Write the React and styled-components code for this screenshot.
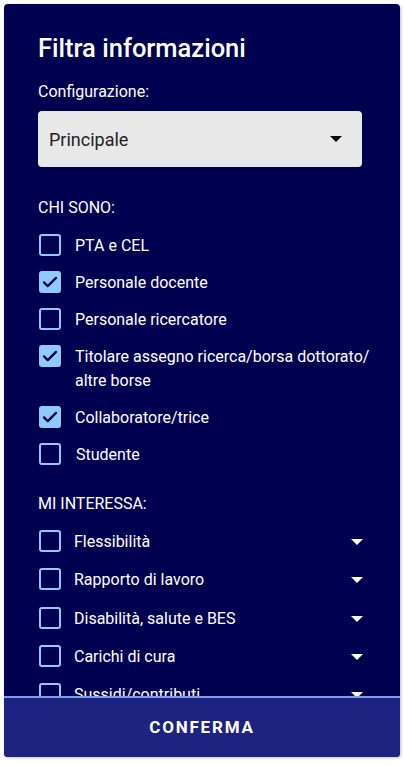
import React, { useState } from "react";
import styled, { createGlobalStyle } from "styled-components";

const GlobalStyle = createGlobalStyle`
  html, body {
    margin: 0;
    padding: 0;
    background: #ffffff;
    font-family: Roboto, "Liberation Sans", sans-serif;
  }
`;

const Page = styled.div`
  padding: 4px 5px 8px 4px;
  box-sizing: border-box;
  width: 405px;
  height: 765px;
`;

const Card = styled.div`
  height: 753px;
  display: flex;
  flex-direction: column;
  background: #000050;
  border-radius: 4px;
  overflow: hidden;
  box-shadow: 1px 1px 3px rgba(0, 0, 0, 0.25);
`;

const Scroll = styled.div`
  flex: 1;
  overflow: hidden;
  padding: 28px 24px 0 34px;
  color: #ffffff;
`;

const Title = styled.h2`
  margin: 0;
  font-size: 25.5px;
  font-weight: 500;
  line-height: 32px;
`;

const Label = styled.div`
  font-size: 16px;
  line-height: 20px;
  margin-top: ${(p) => p.$top || 0}px;
`;

const Select = styled.div`
  margin: 9px 14px 0 0;
  height: 56px;
  background: #e8e8e8;
  border-radius: 4px;
  display: flex;
  align-items: center;
  justify-content: space-between;
  padding: 0 20px 0 11px;
  color: #222;
  font-size: 18px;
`;

const Caret = styled.span`
  width: 0;
  height: 0;
  border-left: 6px solid transparent;
  border-right: 6px solid transparent;
  border-top: 6px solid ${(p) => p.$color || "#000"};
`;

const List = styled.div`
  margin-top: ${(p) => p.$top}px;
  display: flex;
  flex-direction: column;
  gap: ${(p) => p.$gap}px;
`;

const Row = styled.label`
  display: flex;
  align-items: flex-start;
  gap: 14px;
  font-size: 16px;
  line-height: 24px;
  cursor: pointer;
`;

const Box = styled.span`
  flex: none;
  width: 22px;
  height: 22px;
  margin-left: 1px;
  box-sizing: border-box;
  border: 2.5px solid #90caf9;
  border-radius: 3px;
  background: ${(p) => (p.$checked ? "#90caf9" : "transparent")};
  display: flex;
  align-items: center;
  justify-content: center;
`;

const Text = styled.span`
  flex: 1;
  margin-left: ${(p) => p.$shift || 0}px;
`;

const Expand = styled.span`
  flex: none;
  display: flex;
  align-items: center;
  height: 24px;
  margin-right: 13px;
`;

const Footer = styled.button`
  flex: none;
  height: 61px;
  border: none;
  border-top: 2px solid #7d9be6;
  background: #1d2380;
  color: #ffffff;
  font-family: Roboto, "Liberation Sans", sans-serif;
  font-size: 17px;
  font-weight: 700;
  letter-spacing: 1.8px;
  padding-bottom: 2px;
  cursor: pointer;
`;

const Check = () => (
  <svg width="18" height="18" viewBox="0 0 24 24">
    <path
      d="M4 12.5l5 5L20 6.5"
      fill="none"
      stroke="#000050"
      strokeWidth="3"
      strokeLinecap="round"
      strokeLinejoin="round"
    />
  </svg>
);

const whoItems = [
  { label: "PTA e CEL", checked: false },
  { label: "Personale docente", checked: true },
  { label: "Personale ricercatore", checked: false },
  { label: "Titolare assegno ricerca/borsa dottorato/ altre borse", checked: true },
  { label: "Collaboratore/trice", checked: true },
  { label: "Studente", checked: false, shift: 1 },
];

const interestItems = [
  "Flessibilità",
  "Rapporto di lavoro",
  "Disabilità, salute e BES",
  "Carichi di cura",
  "Sussidi/contributi",
  "Altro",
];

const App = () => {
  const [who, setWho] = useState(whoItems.map((i) => i.checked));
  const [interest, setInterest] = useState(interestItems.map(() => false));

  const toggle = (arr, set, idx) => set(arr.map((v, i) => (i === idx ? !v : v)));

  return (
    <>
      <GlobalStyle />
      <Page>
        <Card>
          <Scroll>
            <Title>Filtra informazioni</Title>
            <Label $top={18}>Configurazione:</Label>
            <Select>
              <span>Principale</span>
              <Caret />
            </Select>
            <Label $top={31}>CHI SONO:</Label>
            <List $top={16} $gap={13}>
              {whoItems.map((item, i) => (
                <Row key={item.label} onClick={() => toggle(who, setWho, i)}>
                  <Box $checked={who[i]}>{who[i] && <Check />}</Box>
                  <Text $shift={item.shift}>{item.label}</Text>
                </Row>
              ))}
            </List>
            <Label $top={27}>MI INTERESSA:</Label>
            <List $top={16} $gap={14.3}>
              {interestItems.map((label, i) => (
                <Row key={label} onClick={() => toggle(interest, setInterest, i)}>
                  <Box $checked={interest[i]}>{interest[i] && <Check />}</Box>
                  <Text $shift={-1}>{label}</Text>
                  <Expand>
                    <Caret $color="#ffffff" />
                  </Expand>
                </Row>
              ))}
            </List>
          </Scroll>
          <Footer>CONFERMA</Footer>
        </Card>
      </Page>
    </>
  );
};

export default App;
